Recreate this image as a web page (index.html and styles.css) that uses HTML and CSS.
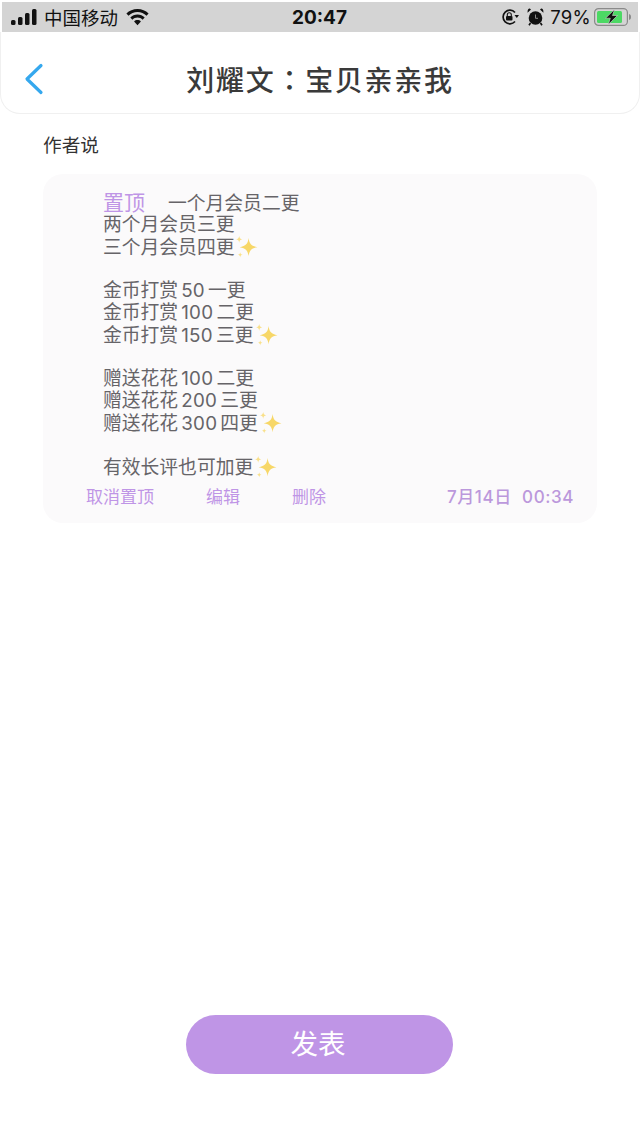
FILE: index.html
```html
<!DOCTYPE html>
<html>
<head>
    <meta charset="utf-8">
    <link rel="stylesheet" href="styles.css">
    <title>作者说</title>
</head>
<body>
    <svg class="defs" width="0" height="0">
        <symbol id="sparkle" viewBox="0 0 22 22">
            <path fill="#f7d768" d="M13 2c.7 5.500 2.600 7.800 8.500 8.700-5.900.9-7.800 3.200-8.500 8.700-.7-5.500-2.600-7.800-8.500-8.700 5.900-.9 7.800-3.200 8.500-8.700z"/>
            <path fill="#f9e08a" d="M4 0c.3 2 1 2.800 3 3.200C5 3.600 4.300 4.400 4 6.400 3.700 4.400 3 3.600 1 3.200 3 2.800 3.700 2 4 0z"/>
            <path fill="#f9e08a" d="M5 15.500c.2 1.600.8 2.200 2.300 2.500C5.800 18.300 5.200 18.900 5 20.500c-.2-1.600-.8-2.200-2.300-2.500C4.200 17.700 4.800 17.100 5 15.500z"/>
        </symbol>
    </svg>

    <!-- Status bar -->
    <div class="status-bar">
        <div class="status-left">
            <svg class="signal" width="26" height="16" viewBox="0 0 26 16">
                <rect x="0" y="11" width="4.500" height="5" rx="1.500"/>
                <rect x="7" y="8" width="4.500" height="8" rx="1.500"/>
                <rect x="14" y="4" width="4.500" height="12" rx="1.500"/>
                <rect x="21" y="0" width="4.500" height="16" rx="1.500"/>
            </svg>
            <span class="carrier">中国移动</span>
            <svg class="wifi" width="23" height="17" viewBox="0 0 23 17">
                <path d="M11.500 0C7.200 0 3.300 1.700.4 4.500l2.100 2.200C4.800 4.400 8 3 11.500 3s6.700 1.400 9 3.700l2.100-2.200C19.700 1.700 15.800 0 11.500 0z"/>
                <path d="M11.500 5.600c-2.800 0-5.300 1.100-7.200 2.900l2.100 2.200c1.300-1.300 3.100-2.100 5.100-2.100s3.800.8 5.100 2.100l2.100-2.200c-1.900-1.800-4.400-2.900-7.200-2.900z"/>
                <path d="M11.500 11c-1.300 0-2.500.5-3.400 1.400l3.400 3.900 3.400-3.900c-.9-.9-2.100-1.400-3.400-1.400z"/>
            </svg>
        </div>
        <div class="status-time">20:47</div>
        <div class="status-right">
            <svg class="lock" width="18" height="16" viewBox="0 0 18 16">
                <path d="M14 12.500A6.800 6.800 0 1 1 14 3.500" fill="none" stroke="#111" stroke-width="1.700"/>
                <path d="M13.500 6h4.500l-2.200 3z" fill="#111"/>
                <rect x="5" y="7" width="6.500" height="4.500" rx="1" fill="#111"/>
                <path d="M6.300 7V5.800a2 2 0 0 1 4 0V7" fill="none" stroke="#111" stroke-width="1.100"/>
            </svg>
            <svg class="alarm" width="17" height="18" viewBox="0 0 17 18">
                <circle cx="8.500" cy="10" r="6.800" fill="#111"/>
                <path d="M8.500 6.500v3.800h2.500" fill="none" stroke="#8a8a8a" stroke-width="1"/>
                <path d="M.6 4.800 4 1.400 2.800.6C1.600.4.300 1.800.6 4.800zM16.400 4.800 13 1.400 14.200.6c1.200-.2 2.500 1.200 2.200 4.200z" fill="#111"/>
                <path d="M3.500 15 2 17.300M13.500 15l1.500 2.300" stroke="#111" stroke-width="1.600"/>
            </svg>
            <span class="battery-pct">79%</span>
            <svg class="battery" width="38" height="18" viewBox="0 0 38 18">
                <rect x=".6" y=".6" width="32.800" height="16.800" rx="4" fill="none" stroke="#8a8a8a" stroke-width="1.200"/>
                <rect x="3" y="3" width="25" height="12" rx="1.500" fill="#4cd964"/>
                <path d="M35 6c1.500.3 2 1.500 2 3s-.5 2.700-2 3z" fill="#8a8a8a"/>
                <path d="M20.500 1.500 11.500 10.200h4.800l-2 6.300 9.200-9h-5z" fill="#111" stroke="#d4d4d4" stroke-width=".6"/>
            </svg>
        </div>
    </div>

    <!-- Title bar -->
    <div class="nav-bar">
        <svg class="back-icon" width="20" height="32" viewBox="0 0 20 32">
            <path d="M17 2.500 3 16l14 13.500" fill="none" stroke="#35a8ee" stroke-width="3.200" stroke-linecap="round" stroke-linejoin="round"/>
        </svg>
        <div class="nav-title">刘耀文<span class="colon">：</span>宝贝亲亲我</div>
    </div>

    <div class="section-title">作者说</div>

    <div class="note-card">
        <div class="note-body">
            <div class="line"><span class="pinned">置顶</span>一个月会员二更</div>
            <div class="line">两个月会员三更</div>
            <div class="line">三个月会员四更<svg class="spark"><use href="#sparkle"/></svg></div>
            <div class="line blank"></div>
            <div class="line">金币打赏<span class="num">50</span>一更</div>
            <div class="line">金币打赏<span class="num">100</span>二更</div>
            <div class="line">金币打赏<span class="num">150</span>三更<svg class="spark"><use href="#sparkle"/></svg></div>
            <div class="line blank"></div>
            <div class="line">赠送花花<span class="num">100</span>二更</div>
            <div class="line">赠送花花<span class="num">200</span>三更</div>
            <div class="line">赠送花花<span class="num">300</span>四更<svg class="spark"><use href="#sparkle"/></svg></div>
            <div class="line blank"></div>
            <div class="line">有效长评也可加更<svg class="spark"><use href="#sparkle"/></svg></div>
        </div>
        <div class="note-footer">
            <span class="action cancel">取消置顶</span>
            <span class="action edit">编辑</span>
            <span class="action">删除</span>
            <span class="note-time">7月14日&nbsp;&nbsp;00:34</span>
        </div>
    </div>

    <div class="spacer"></div>

    <div class="publish-row">
        <div class="publish-button">发表</div>
    </div>
</body>
</html>
```

FILE: styles.css
```css
body {
    margin: 0;
    padding: 0;
    width: 640px;
    height: 1138px;
    display: flex;
    flex-direction: column;
    overflow: hidden;
    background-color: #ffffff;
    font-family: Inter, "Noto Sans CJK SC", sans-serif;
    color: #333333;
}

.defs {
    position: absolute;
}

/* Status bar */
.status-bar {
    margin: 2px 2px 0;
    height: 30px;
    background-color: #d4d4d4;
    display: flex;
    align-items: center;
    color: #111111;
    flex-shrink: 0;
}

.status-left,
.status-right {
    flex: 1;
    display: flex;
    align-items: center;
}

.status-left {
    padding-left: 9px;
}

.status-right {
    justify-content: flex-end;
    padding-right: 6px;
}

.signal,
.wifi {
    fill: #111111;
}

.carrier {
    margin-left: 7px;
    font-size: 18.500px;
}

.wifi {
    margin-left: 8px;
}

.status-time {
    font-size: 19px;
    font-weight: 700;
    width: 60px;
    text-align: center;
    margin-left: -4px;
}

.alarm {
    margin-left: 8px;
}

.battery-pct {
    margin-left: 6px;
    font-size: 18.500px;
    letter-spacing: 0.300px;
}

.battery {
    margin-left: 3px;
}

/* Title bar */
.nav-bar {
    height: 82px;
    box-sizing: border-box;
    padding-top: 14px;
    display: flex;
    align-items: center;
    justify-content: center;
    position: relative;
    flex-shrink: 0;
    border: 1px solid #f0f0f0;
    border-top: none;
    border-radius: 0 0 20px 20px;
    background-color: #ffffff;
}

.back-icon {
    position: absolute;
    left: 23px;
    top: 31px;
}

.nav-title {
    font-size: 28px;
    font-weight: 500;
    letter-spacing: 1.700px;
    color: #3a3a3a;
    line-height: 40px;
}

.colon {
    font-family: "Noto Sans CJK TC", sans-serif;
}

.section-title {
    margin: 20px 0 0 43px;
    font-size: 18.700px;
    line-height: 24px;
    color: #333333;
}

/* Author note */
.note-card {
    margin: 16px 43px 0;
    height: 349px;
    box-sizing: border-box;
    padding-top: 18px;
    background-color: #fbfafb;
    border-radius: 20px;
    display: flex;
    flex-direction: column;
    flex-shrink: 0;
}

.note-body {
    padding-left: 60px;
    font-size: 18.800px;
    color: #666468;
}

.line {
    height: 22px;
    line-height: 22px;
    white-space: nowrap;
}

.pinned {
    color: #bf95e6;
    font-size: 21px;
    margin-right: 23px;
}

.num {
    margin: 0 3px;
    letter-spacing: 0.300px;
}

.spark {
    width: 23px;
    height: 23px;
    vertical-align: -5px;
    margin-left: 1px;
}

.note-footer {
    display: flex;
    align-items: center;
    padding: 0 23px 0 43px;
    margin-top: 7px;
    color: #bf95e6;
}

.action {
    font-size: 17px;
    line-height: 24px;
}

.cancel {
    margin-right: 52px;
}

.edit {
    margin-right: 52px;
}

.note-time {
    margin-left: auto;
    font-size: 17px;
    font-weight: 500;
    letter-spacing: 0.600px;
    line-height: 24px;
    color: #bb98dc;
}

.spacer {
    flex: 1;
}

/* Publish button */
.publish-row {
    display: flex;
    padding: 0 0 64px 186px;
}

.publish-button {
    width: 267px;
    height: 59px;
    box-sizing: border-box;
    padding-right: 3px;
    border-radius: 30px;
    background-color: #bf95e6;
    color: #ffffff;
    font-size: 27.500px;
    line-height: 59px;
    text-align: center;
}
```
